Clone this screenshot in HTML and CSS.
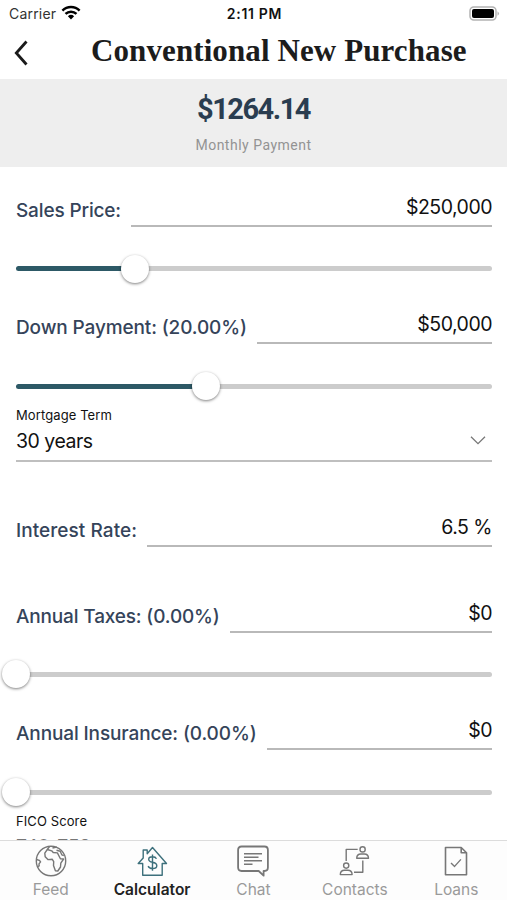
FILE: index.html
```html
<!DOCTYPE html>
<html lang="en">
<head>
    <meta charset="UTF-8">
    <meta name="viewport" content="width=device-width, initial-scale=1.0">
    <title>Conventional New Purchase</title>
    <link rel="stylesheet" href="styles.css">
</head>
<body>
    <div class="app">
        <div class="status-bar">
            <div class="carrier">
                <span class="carrier-name">Carrier</span>
                <svg width="20" height="15" viewBox="0 0 20 15">
                    <g fill="none" stroke="#000" stroke-width="2.5">
                        <path d="M1.4 5.6a12.3 12.3 0 0 1 17.2 0"/>
                        <path d="M4.5 8.9a7.9 7.9 0 0 1 11 0"/>
                    </g>
                    <path d="M6.9 11.3a4.5 4.5 0 0 1 6.2 0L10 14.4z"/>
                </svg>
            </div>
            <div class="time">2:11 PM</div>
            <div class="battery">
                <svg width="31" height="15" viewBox="0 0 31 15">
                    <rect x="1" y="1" width="26" height="13" rx="3.8" fill="#fff" stroke="#b2b2b2" stroke-width="1.5"/>
                    <rect x="3" y="3" width="22" height="9" rx="2" fill="#000"/>
                    <path d="M28.5 5.2q3 2.3 0 4.6z" fill="#b2b2b2"/>
                </svg>
            </div>
        </div>

        <header class="header">
            <svg class="back" width="16" height="28" viewBox="0 0 16 28">
                <path d="M13.5 2.5L3.3 14l10.2 11.5" fill="none" stroke="#1a1a1a" stroke-width="2.8"/>
            </svg>
            <h1>Conventional New Purchase</h1>
        </header>

        <section class="summary">
            <div class="amount">$1264.14</div>
            <div class="caption">Monthly Payment</div>
        </section>

        <main class="form">
            <div class="field">
                <label class="sales">Sales Price:</label>
                <div class="value">$250,000</div>
            </div>
            <div class="slider">
                <div class="fill" style="width: 25%"></div>
                <div class="thumb"></div>
                <div class="track"></div>
            </div>

            <div class="field down-field">
                <label class="down">Down Payment: (20.00%)</label>
                <div class="value">$50,000</div>
            </div>
            <div class="slider short">
                <div class="fill" style="width: 40%"></div>
                <div class="thumb"></div>
                <div class="track"></div>
            </div>

            <div class="select">
                <div class="select-label">Mortgage Term</div>
                <div class="select-value">
                    <span>30 years</span>
                    <svg width="16" height="10" viewBox="0 0 16 10">
                        <path d="M1 .8l7 6.8 7-6.8" fill="none" stroke="#777" stroke-width="1.3"/>
                    </svg>
                </div>
            </div>

            <div class="field rate-field">
                <label class="rate">Interest Rate:</label>
                <div class="value">6.5 %</div>
            </div>

            <div class="field taxes-field">
                <label class="taxes">Annual Taxes: (0.00%)</label>
                <div class="value">$0</div>
            </div>
            <div class="slider taxes-slider">
                <div class="fill" style="width: 0%"></div>
                <div class="thumb"></div>
                <div class="track"></div>
            </div>

            <div class="field insurance-field">
                <label class="insurance">Annual Insurance: (0.00%)</label>
                <div class="value">$0</div>
            </div>
            <div class="slider short">
                <div class="fill" style="width: 0%"></div>
                <div class="thumb"></div>
                <div class="track"></div>
            </div>

            <div class="select fico">
                <div class="select-label">FICO Score</div>
                <div class="select-value"><span>740-759</span></div>
            </div>
        </main>

        <nav class="tabs">
            <div class="tab">
                <svg width="32" height="32" viewBox="0 0 32 32">
                    <circle cx="16" cy="16" r="14.7"/>
                    <path d="M12.3 4.5L9.8 8.2l.4 3.6 2.7 2.8 4.4-.3 1.4 2.4-.2 3.7 1.9 5.4 2.4.2 2.7-4 .3-3.8 2.8-4.2-3.2-.3-3-5.8-4.2-.4-1.5-1.7z"/>
                    <path d="M14.5 1.6l-2.2 2.9M17.5 3l4.3-1M21.5 5.3l3.7 1 1.6 3.5 2 .8M1.5 14.5l2.8.8 1.3 1.6-1.6 2 .2 2-2 .9"/>
                </svg>
                <span class="feed">Feed</span>
            </div>
            <div class="tab active">
                <svg width="32" height="32" viewBox="0 0 32 32">
                    <path d="M6.7 18.5H2.2L7.2 13V5h4v3.7l5.3-6.2 14 16h-4.3v11.8H6.7z"/>
                    <path d="M20.5 13.7q-1-2-4-2-3.8 0-3.8 2.6 0 2.3 3.8 3 4.3.8 4.3 3.4 0 2.8-4.3 2.8-3.3 0-4.4-2.4M16.5 9.5v16.2"/>
                </svg>
                <span class="calculator">Calculator</span>
            </div>
            <div class="tab">
                <svg width="32" height="32" viewBox="0 0 32 32">
                    <path stroke-width="1.8" d="M4.5 1.5h23q3.4 0 3.4 3.4v17.7q0 3.4-3.4 3.4h-.9v4.7L21.7 26H4.5q-3.4 0-3.4-3.4V4.9q0-3.4 3.4-3.4z"/>
                    <path d="M7 8.8h18M7 12.3h14.5M7 15.8h18M7 19.3h8.5"/>
                </svg>
                <span class="chat">Chat</span>
            </div>
            <div class="tab">
                <svg width="32" height="32" viewBox="0 0 32 32">
                    <circle cx="23.6" cy="4.4" r="2.6"/>
                    <path d="M17.7 13.2q.1-4.2 4.2-4.2h3.4q4.1 0 4.2 4.2z"/>
                    <circle cx="7.2" cy="20.6" r="2.6"/>
                    <path d="M1.3 29.6q.1-4.4 4.2-4.4h3.4q4.1 0 4.2 4.4z"/>
                    <path d="M7.2 16V4.4h11.5M23.8 15.4v11.9H15"/>
                </svg>
                <span class="contacts">Contacts</span>
            </div>
            <div class="tab">
                <svg width="32" height="32" viewBox="0 0 32 32">
                    <path stroke-width="1.6" d="M5.5 2.5h15.7l5.3 5.3v21.9h-21zM21.2 2.5v5.3h5.3"/>
                    <path d="M11 18l3.6 3.4 6.3-7"/>
                </svg>
                <span class="loans">Loans</span>
            </div>
        </nav>
    </div>
</body>
</html>
```

FILE: styles.css
```css
* {
    margin: 0;
    padding: 0;
    box-sizing: border-box;
}

body {
    background-color: #fff;
    font-family: Inter, "Liberation Sans", sans-serif;
    color: #111;
}

.app {
    display: flex;
    flex-direction: column;
    height: 900px;
    overflow: hidden;
}

svg {
    display: block;
}

/* status bar */
.status-bar {
    display: grid;
    grid-template-columns: 1fr auto 1fr;
    align-items: center;
    height: 27px;
    padding: 0 7px 0 9px;
    font-size: 14px;
}

.carrier {
    display: flex;
    align-items: center;
    gap: 5px;
    color: #333;
}

.carrier-name {
    letter-spacing: 0.2px;
}

.carrier svg {
    margin-top: -3px;
}

.time {
    font-weight: 600;
    letter-spacing: 0.7px;
}

.battery {
    display: flex;
    justify-content: flex-end;
}

/* title */
.header {
    display: flex;
    align-items: center;
    height: 52px;
    padding: 0 40px 4px 13px;
}

.header h1 {
    flex: 1;
    margin-left: 62px;
    font-family: "Liberation Serif", serif;
    font-size: 31px;
    line-height: 40px;
    letter-spacing: 0.1px;
    color: #1c1c1c;
    white-space: nowrap;
}

.back {
    margin-top: 3px;
}

.summary {
    height: 88px;
    padding-top: 13px;
    background-color: #eee;
    text-align: center;
}

.amount {
    font-family: Roboto, sans-serif;
    font-size: 29px;
    font-weight: 700;
    line-height: 34px;
    letter-spacing: -1.5px;
    color: #2a3d50;
}

.caption {
    margin-top: 10px;
    font-family: Roboto, sans-serif;
    font-size: 14px;
    line-height: 18px;
    letter-spacing: 0.5px;
    color: #939393;
}

/* form */
.form {
    flex: 1;
    min-height: 0;
    overflow: hidden;
    padding: 0 15px 0 16px;
}

.field {
    display: flex;
    align-items: flex-end;
    height: 60px;
    gap: 10px;
}

.field label {
    font-size: 19px;
    font-weight: 500;
    line-height: 24px;
    padding-bottom: 4px;
    color: #35445a;
    white-space: nowrap;
}

.field .sales {
    letter-spacing: -0.15px;
}

.field .down,
.field .insurance {
    letter-spacing: -0.12px;
}

.field .rate {
    letter-spacing: 0.06px;
}

.field .taxes {
    letter-spacing: -0.16px;
}

.value {
    flex: 1;
    height: 33px;
    border-bottom: 2px solid #b9b9b9;
    font-size: 19.5px;
    line-height: 26px;
    letter-spacing: -0.5px;
    text-align: right;
}

.slider {
    display: flex;
    align-items: center;
    height: 83px;
}

.slider.short {
    height: 62px;
    align-items: flex-start;
    padding-top: 28px;
}

.slider.short .fill,
.slider.short .track {
    margin-top: 12px;
}

.fill {
    height: 5px;
    border-radius: 3px 0 0 3px;
    background-color: #2d5966;
}

.thumb {
    flex: none;
    width: 28px;
    height: 28px;
    margin: 0 -14px;
    border-radius: 50%;
    background-color: #fff;
    box-shadow: 0 1px 3px rgba(0, 0, 0, 0.5);
    position: relative;
}

.track {
    flex: 1;
    height: 5px;
    border-radius: 0 3px 3px 0;
    background-color: #ccc;
}

.down-field {
    height: 34px;
}

.select {
    height: 56px;
    border-bottom: 2px solid #bfbfbf;
}

.select-label {
    font-size: 13px;
    line-height: 19px;
    letter-spacing: 0.1px;
}

.select-value {
    display: flex;
    justify-content: space-between;
    align-items: center;
    padding: 3px 6px 0 0;
    font-size: 19.5px;
    line-height: 26px;
    letter-spacing: -0.5px;
}

.rate-field {
    height: 85px;
}

.taxes-field {
    height: 86px;
}

.taxes-slider {
    height: 82px;
}

.insurance-field {
    height: 35px;
}

.fico .select-value {
    color: #777;
}

/* bottom tabs */
.tabs {
    display: grid;
    grid-template-columns: repeat(5, 1fr);
    height: 60px;
    border-top: 1px solid #dcdcdc;
    background-color: #fdfdfd;
}

.tab {
    display: flex;
    flex-direction: column;
    align-items: center;
    padding-top: 4px;
    font-size: 15.5px;
    line-height: 18px;
    color: #9a9a9a;
}

.tab svg {
    fill: none;
    stroke: #777;
    stroke-width: 1.4;
    stroke-linejoin: round;
}

.tab span {
    margin-top: 4px;
}

.tab.active {
    font-weight: 600;
    color: #222;
}

.tab.active svg {
    stroke: #3d707c;
}
```
